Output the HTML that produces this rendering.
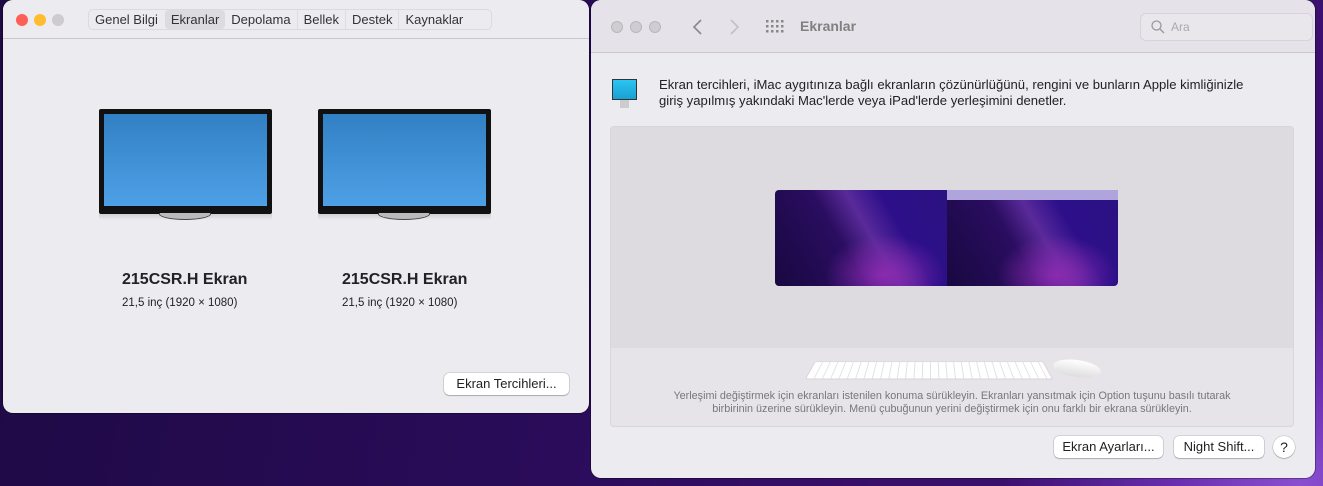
<!DOCTYPE html>
<html><head><meta charset="utf-8"><style>
*{box-sizing:border-box;margin:0;padding:0}
body{width:1323px;height:486px;overflow:hidden;position:relative;font-family:"Liberation Sans",sans-serif;
background:radial-gradient(ellipse 300px 260px at 1300px 486px,#8a4fd0 0%,#6a2fb0 40%,transparent 100%),linear-gradient(100deg,#1e0a44 0%,#2a0c5a 45%,#3a0f6a 70%,#3c1070 100%);}
.w{position:absolute;background:#ecebf0;border-radius:10px;overflow:hidden;box-shadow:0 0 0 1px rgba(0,0,0,.3)}
.dot{position:absolute;width:12px;height:12px;border-radius:50%}
.btn{position:absolute;background:#fff;border-radius:5px;box-shadow:0 0 0 .5px rgba(0,0,0,.2),0 1px 1px rgba(0,0,0,.2);font-size:13px;color:#222;text-align:center;line-height:22px;height:22px}
.mon{position:absolute;width:173px;height:105px;background:#111;border-radius:2px}
.mon i{position:absolute;left:5px;top:5px;right:5px;bottom:8px;background:linear-gradient(#3280c4,#4ea0e6)}
.st{position:absolute;width:52px;height:7px;border:1px solid #444;border-top:none;border-radius:0 0 26px 26px/0 0 6px 6px;background:#bbb}
.sh{position:absolute;width:173px;height:6px;background:linear-gradient(rgba(0,0,0,.12),transparent)}
</style></head><body>
<div class="w" style="left:3px;top:0;width:586px;height:413px">
 <div style="position:absolute;left:0;top:0;right:0;height:39px;border-bottom:1px solid #c9c7cc;background:#ecebf0"></div>
 <div class="dot" style="left:13px;top:14px;background:#fe5f57"></div>
 <div class="dot" style="left:31px;top:14px;background:#febc2e"></div>
 <div class="dot" style="left:49px;top:14px;background:#cdcbd0"></div>
 <div style="position:absolute;left:85px;top:9px;width:404px;height:21px;border:1px solid #dcdadf;border-radius:5px;font-size:13px;color:#333;line-height:19px;display:flex">
  <span style="padding:0 7px 0 6px">Genel Bilgi</span><span style="padding:0 6px;background:#dcdbe0;border-radius:4px">Ekranlar</span><span style="padding:0 6px;border-right:1px solid #ddd">Depolama</span><span style="padding:0 6px;border-right:1px solid #ddd">Bellek</span><span style="padding:0 6px;border-right:1px solid #ddd">Destek</span><span style="padding:0 6px">Kaynaklar</span>
 </div>
 <div class="mon" style="left:96px;top:109px"><i></i></div><div class="sh" style="left:96px;top:214px"></div><div class="st" style="left:156px;top:213px"></div>
 <div class="mon" style="left:315px;top:109px"><i></i></div><div class="sh" style="left:315px;top:214px"></div><div class="st" style="left:375px;top:213px"></div>
 <div style="position:absolute;left:119px;top:271px;font-size:16px;font-weight:bold;color:#222">215CSR.H Ekran</div>
 <div style="position:absolute;left:119px;top:297px;font-size:11.5px;color:#222">21,5 inç (1920 × 1080)</div>
 <div style="position:absolute;left:339px;top:271px;font-size:16px;font-weight:bold;color:#222">215CSR.H Ekran</div>
 <div style="position:absolute;left:339px;top:297px;font-size:11.5px;color:#222">21,5 inç (1920 × 1080)</div>
 <div class="btn" style="left:441px;top:373px;width:125px">Ekran Tercihleri...</div>
</div>
<div class="w" style="left:591px;top:0;width:724px;height:478px">
 <div style="position:absolute;left:0;top:0;right:0;height:53px;border-bottom:1px solid #c9c7cc;background:#e5e3e9"></div>
 <div class="dot" style="left:20px;top:21px;background:#cfcdd2;border:1px solid #b9b7bc"></div>
 <div class="dot" style="left:39px;top:21px;background:#cfcdd2;border:1px solid #b9b7bc"></div>
 <div class="dot" style="left:58px;top:21px;background:#cfcdd2;border:1px solid #b9b7bc"></div>
 <svg style="position:absolute;left:100px;top:18px" width="50" height="18"><path d="M10 2 L3 9 L10 16" stroke="#888" stroke-width="1.6" fill="none"/><path d="M40 2 L47 9 L40 16" stroke="#c2c0c5" stroke-width="1.6" fill="none"/></svg>
 <svg style="position:absolute;left:175px;top:20px" width="18" height="14" fill="#888"><g><rect x="0" y="0" width="2.5" height="2.5"/><rect x="5" y="0" width="2.5" height="2.5"/><rect x="10" y="0" width="2.5" height="2.5"/><rect x="15" y="0" width="2.5" height="2.5"/><rect x="0" y="5" width="2.5" height="2.5"/><rect x="5" y="5" width="2.5" height="2.5"/><rect x="10" y="5" width="2.5" height="2.5"/><rect x="15" y="5" width="2.5" height="2.5"/><rect x="0" y="10" width="2.5" height="2.5"/><rect x="5" y="10" width="2.5" height="2.5"/><rect x="10" y="10" width="2.5" height="2.5"/><rect x="15" y="10" width="2.5" height="2.5"/></g></svg>
 <div style="position:absolute;left:209px;top:18px;font-size:14px;font-weight:bold;color:#808080">Ekranlar</div>
 <div style="position:absolute;left:549px;top:13px;width:173px;height:28px;border:1px solid #d6d4d9;border-radius:6px;background:#e9e7ec"></div>
 <svg style="position:absolute;left:560px;top:20px" width="14" height="14"><circle cx="5.5" cy="5.5" r="4.5" stroke="#999" stroke-width="1.3" fill="none"/><path d="M9 9 L13 13" stroke="#999" stroke-width="1.3"/></svg>
 <div style="position:absolute;left:580px;top:20px;font-size:12px;color:#aaa">Ara</div>
 <div style="position:absolute;left:21px;top:79px;width:25px;height:21px;background:linear-gradient(#2bc5f0,#1aa0d4);border:1px solid #333"></div>
 <div style="position:absolute;left:29px;top:100px;width:9px;height:8px;background:#ccc"></div>
 <div style="position:absolute;left:68px;top:77px;font-size:13.1px;line-height:16px;color:#222;white-space:nowrap">Ekran tercihleri, iMac aygıtınıza bağlı ekranların çözünürlüğünü, rengini ve bunların Apple kimliğinizle<br>giriş yapılmış yakındaki Mac'lerde veya iPad'lerde yerleşimini denetler.</div>
 <div style="position:absolute;left:19px;top:126px;width:684px;height:301px;border:1px solid #d8d6db;border-radius:4px;background:#e6e4e9;overflow:hidden">
  <div style="position:absolute;left:0;top:0;right:0;height:221px;background:#dddbe0"></div>
  <div style="position:absolute;left:164px;top:63px;width:172px;height:96px;border-radius:4px 0 0 4px;background:radial-gradient(ellipse 60px 40px at 110px 85px,#8a2bb0,transparent),linear-gradient(60deg,#180840 0%,#2a0d60 40%,#5a2a9a 55%,#2d0f8a 70%,#2a1280 100%)"></div>
  <div style="position:absolute;left:336px;top:63px;width:171px;height:96px;border-radius:0 4px 4px 0;background:radial-gradient(ellipse 60px 40px at 110px 85px,#8a2bb0,transparent),linear-gradient(60deg,#180840 0%,#2a0d60 40%,#5a2a9a 55%,#2d0f8a 70%,#2a1280 100%)"><div style="height:10px;background:#b0a4dc"></div></div>
  <div style="position:absolute;left:199px;top:233px;width:238px;height:20px;background:repeating-linear-gradient(90deg,#fff 0 7px,#e2e2e4 7px 8px);border:1px solid #d5d5d8;border-radius:2px;transform:perspective(100px) rotateX(25deg)"></div>
  <div style="position:absolute;left:442px;top:233px;width:48px;height:17px;border-radius:50%;background:linear-gradient(#fff,#ddd);transform:rotate(8deg)"></div>
  <div style="position:absolute;left:0;right:0;top:263px;text-align:center;font-size:10.8px;line-height:13px;color:#777;white-space:nowrap">Yerleşimi değiştirmek için ekranları istenilen konuma sürükleyin. Ekranları yansıtmak için Option tuşunu basılı tutarak<br>birbirinin üzerine sürükleyin. Menü çubuğunun yerini değiştirmek için onu farklı bir ekrana sürükleyin.</div>
 </div>
 <div class="btn" style="left:463px;top:436px;width:109px">Ekran Ayarları...</div>
 <div class="btn" style="left:583px;top:436px;width:90px">Night Shift...</div>
 <div class="btn" style="left:682px;top:436px;width:22px;border-radius:50%;font-size:14px">?</div>
</div>
</body></html>
